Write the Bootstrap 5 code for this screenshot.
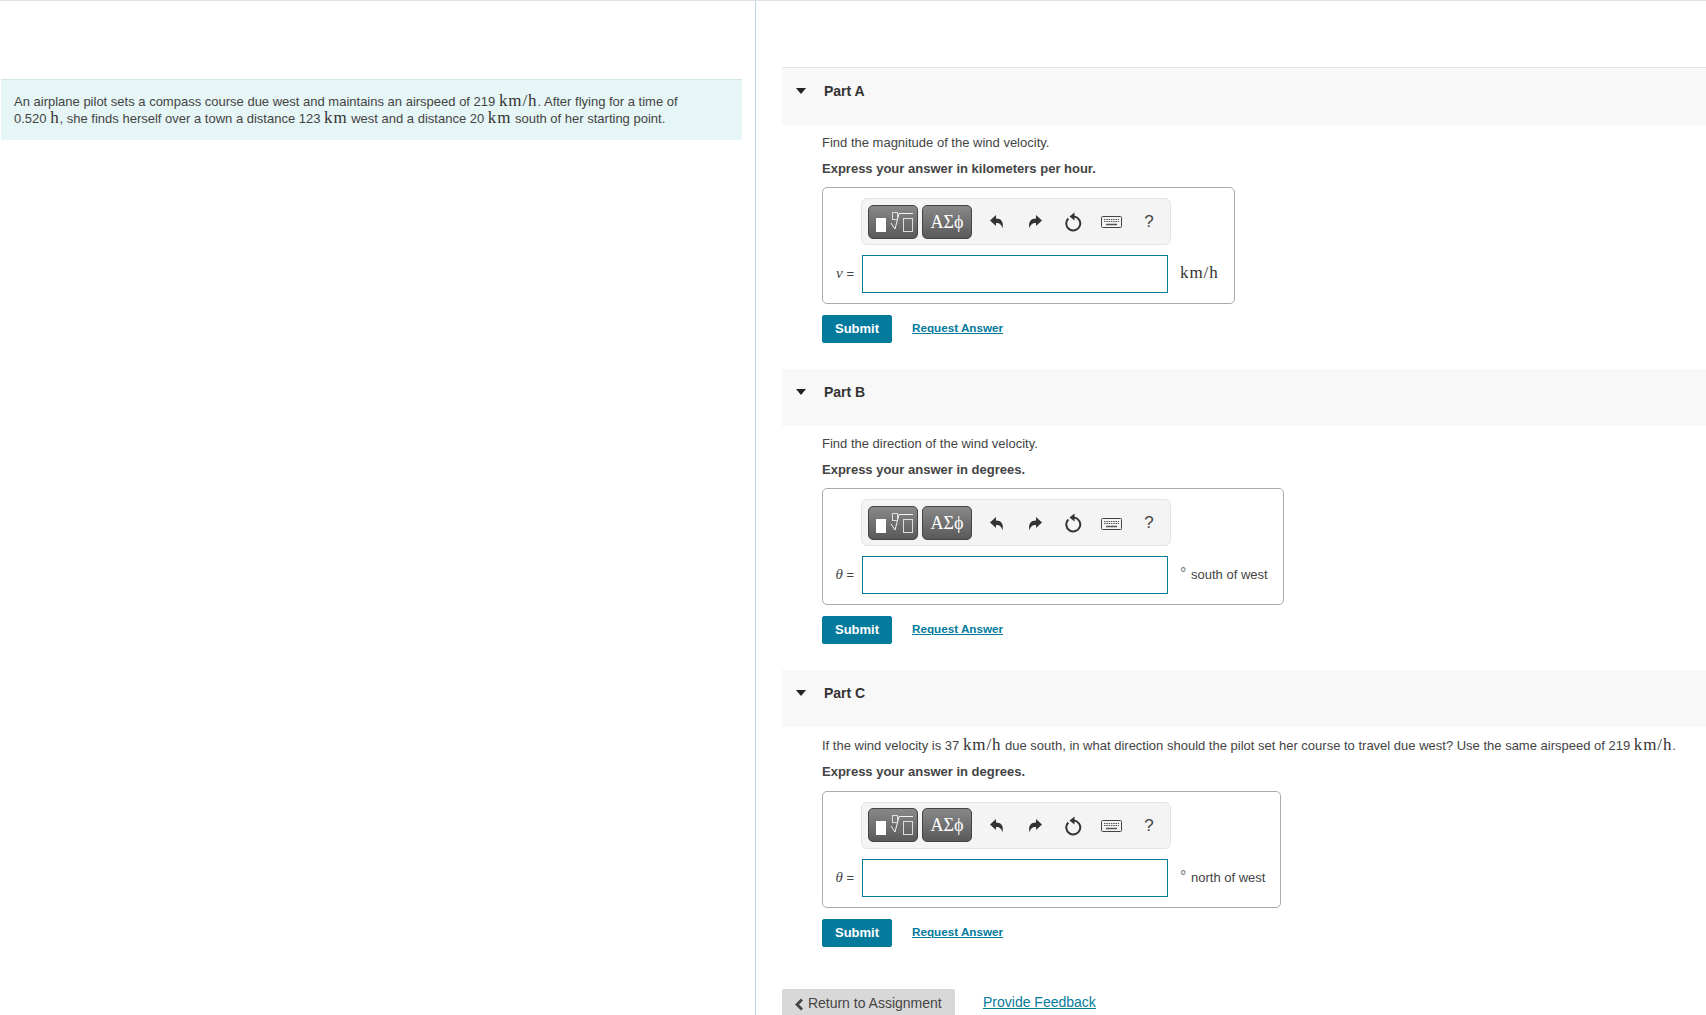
<!DOCTYPE html>
<html lang="en">
<head>
<meta charset="utf-8">
<title>Part A</title>
<link rel="stylesheet" href="https://cdn.jsdelivr.net/npm/bootstrap@5.3.0/dist/css/bootstrap.min.css">
<style>
html, body { height: 1015px; overflow: hidden; }
body { font-family: "Liberation Sans", Arial, sans-serif; font-size: 13px; color: #444; background: #fff; }
.shell { height: 1015px; border-top: 1px solid #e0e0e0; }
.left-pane { width: 756px; flex: none; border-right: 1px solid #bdd3dd; padding: 78px 13px 0 1px; }
.intro { background: #e6f5f5; border-top: 1px solid #d5e5e5; padding: 14px 12px 12px 13px; height: 61px; line-height: 16.5px; font-size: 13px; }
.right-pane { flex: 1; padding: 66px 0 0 26px; min-width: 0; }
.mth { font-family: "Liberation Serif", serif; font-size: 17px; letter-spacing: .9px; color: #333; line-height: 0; }
.part { height: 301.6px; }
.part-head { height: 57px; background: #f8f8f8; padding: 14px 0 0 14px; }
.part-first { height: 58px; border-top: 1px solid #e3e3e3; }
.caret-down { width: 0; height: 0; border-left: 5.5px solid transparent; border-right: 5.5px solid transparent; border-top: 6px solid #222; margin: 6px 18px 0 0; }
.part-title { font-weight: 700; font-size: 14px; color: #333; line-height: 18px; }
.part-body { padding: 8.8px 0 0 40px; }
.part-first + .part-body { padding-top: 8px; }
.prompt { height: 27px; line-height: 18px; padding-top: 1px; }
.instruct { height: 27px; line-height: 18px; font-weight: 700; color: #444; }
.prompt-tall { height: 28px; }
.answer-box { border: 1px solid #aaa; border-radius: 5px; padding: 10px 15px 10px 0; }
.tools { margin-left: 38px; width: 310px; height: 47px; background: #f4f4f4; border: 1px solid #e4e4e4; border-radius: 6px; padding: 6px 0 6px 6px; gap: 4px; }
.tool-btn { flex: none; width: 50px; height: 34px; padding: 0; border: 1px solid #444; border-radius: 5px; background: linear-gradient(#888, #5a5a5a); color: #fff; font-family: "Liberation Serif", serif; font-size: 18px; line-height: 1; }
.tool-btn:hover { background: linear-gradient(#888, #5a5a5a); color: #fff; border-color: #444; }
.tool-btn svg { display: block; }
.tool-icons { flex: none; padding-left: 2px; }
.tool-icon { width: 38px; text-align: center; }
.help-mark { font-size: 17px; color: #444; }
.answer-row { margin-top: 10px; }
.var-label { width: 39px; text-align: right; padding-right: 8px; margin-bottom: 2px; font-size: 13px; color: #444; }
.var-label i { font-family: "Liberation Serif", serif; font-size: 15px; }
.ans-input { width: 306px; height: 38px; border: 1px solid #047a9c; border-radius: 0; }
.unit { margin: 0 0 2px 12px; white-space: nowrap; }
.deg { font-size: 16px; margin-right: 1px; color: #777; }
.actions { margin-top: 11px; }
.send-btn { width: 70px; height: 28px; padding: 0; background: #047a9c; border-color: #047a9c; border-radius: 2px; font-size: 13px; font-weight: 700; color: #fff; line-height: 26px; }
.send-btn:hover { background: #047a9c; border-color: #047a9c; }
.reveal { margin: 0 0 3px 20px; font-size: 11.7px; font-weight: 700; color: #047a9c; }
.foot { margin-top: 17.5px; }
.back-btn { width: 173px; height: 27px; background: #d8d8d8; border: 0; border-radius: 2px 2px 0 0; padding: 1px 0 0 13px; font-size: 14px; color: #444; line-height: 27px; text-align: left; }
.feedback { margin-left: 28px; font-size: 14px; color: #047a9c; }
</style>
</head>
<body>
<div class="shell d-flex">
  <div class="left-pane">
    <div class="intro">An airplane pilot sets a compass course due west and maintains an airspeed of 219 <span class="mth">km/h</span>. After flying for a time of<br>0.520 <span class="mth">h</span>, she finds herself over a town a distance 123 <span class="mth">km</span> west and a distance 20 <span class="mth">km</span> south of her starting point.</div>
  </div>
  <div class="right-pane">

    <section class="part">
      <div class="part-head part-first d-flex align-items-start"><span class="caret-down"></span><span class="part-title">Part A</span></div>
      <div class="part-body">
        <div class="prompt">Find the magnitude of the wind velocity.</div>
        <div class="instruct">Express your answer in kilometers per hour.</div>
        <div class="answer-box d-inline-flex flex-column">
          <div class="tools d-flex align-items-center">
            <button type="button" class="btn tool-btn" aria-label="Templates"><svg width="48" height="32" viewBox="0 0 48 32"><rect x="7" y="12" width="10" height="14" fill="#fff"/><path d="M22 17l4 6 4-15.500h14" fill="none" stroke="#f4f4f4"/><rect x="23.500" y="6.500" width="5" height="7" fill="none" stroke="#ddd"/><rect x="34.500" y="12.500" width="9" height="13" fill="none" stroke="#ddd"/></svg></button>
            <button type="button" class="btn tool-btn">ΑΣϕ</button>
            <div class="tool-icons d-flex align-items-center">
              <span class="tool-icon"><svg width="16" height="16" viewBox="0 0 16 16"><path d="M1 6.500 7 1V4.500C12 4.500 15 7.500 13.500 14.500 12.800 11 11 9 7 9V12Z" fill="#333"/></svg></span>
              <span class="tool-icon"><svg width="16" height="16" viewBox="0 0 16 16"><path d="M15 6.500 9 1V4.500C4 4.500 1 7.500 2.500 14.500 3.200 11 5 9 9 9V12Z" fill="#333"/></svg></span>
              <span class="tool-icon"><svg width="18" height="20" viewBox="0 0 18 20"><path d="M4.300 6.500A7 7 0 1 0 10 4.500" fill="none" stroke="#333" stroke-width="2"/><path d="M10.500 .5v8l-5-4z" fill="#333"/></svg></span>
              <span class="tool-icon"><svg width="21" height="14" viewBox="0 0 21 14"><rect x=".5" y="1.500" width="20" height="11" rx="1" fill="#f4f4f4" stroke="#444"/><path d="M3 4.500h15M3 6.500h15" stroke="#555" stroke-dasharray="1.500 .8"/><path d="M5 9.500h11" stroke="#555" stroke-width="1.500"/></svg></span>
              <span class="tool-icon help-mark">?</span>
            </div>
          </div>
          <div class="answer-row d-flex align-items-center">
            <span class="var-label"><i>v</i> =</span>
            <input type="text" class="form-control ans-input" aria-label="v">
            <span class="unit mth">km/h</span>
          </div>
        </div>
        <div class="actions d-flex align-items-center"><button type="button" class="btn btn-primary send-btn">Submit</button><a href="#" class="reveal">Request Answer</a></div>
      </div>
    </section>

    <section class="part">
      <div class="part-head d-flex align-items-start"><span class="caret-down"></span><span class="part-title">Part B</span></div>
      <div class="part-body">
        <div class="prompt">Find the direction of the wind velocity.</div>
        <div class="instruct">Express your answer in degrees.</div>
        <div class="answer-box d-inline-flex flex-column">
          <div class="tools d-flex align-items-center">
            <button type="button" class="btn tool-btn" aria-label="Templates"><svg width="48" height="32" viewBox="0 0 48 32"><rect x="7" y="12" width="10" height="14" fill="#fff"/><path d="M22 17l4 6 4-15.500h14" fill="none" stroke="#f4f4f4"/><rect x="23.500" y="6.500" width="5" height="7" fill="none" stroke="#ddd"/><rect x="34.500" y="12.500" width="9" height="13" fill="none" stroke="#ddd"/></svg></button>
            <button type="button" class="btn tool-btn">ΑΣϕ</button>
            <div class="tool-icons d-flex align-items-center">
              <span class="tool-icon"><svg width="16" height="16" viewBox="0 0 16 16"><path d="M1 6.500 7 1V4.500C12 4.500 15 7.500 13.500 14.500 12.800 11 11 9 7 9V12Z" fill="#333"/></svg></span>
              <span class="tool-icon"><svg width="16" height="16" viewBox="0 0 16 16"><path d="M15 6.500 9 1V4.500C4 4.500 1 7.500 2.500 14.500 3.200 11 5 9 9 9V12Z" fill="#333"/></svg></span>
              <span class="tool-icon"><svg width="18" height="20" viewBox="0 0 18 20"><path d="M4.300 6.500A7 7 0 1 0 10 4.500" fill="none" stroke="#333" stroke-width="2"/><path d="M10.500 .5v8l-5-4z" fill="#333"/></svg></span>
              <span class="tool-icon"><svg width="21" height="14" viewBox="0 0 21 14"><rect x=".5" y="1.500" width="20" height="11" rx="1" fill="#f4f4f4" stroke="#444"/><path d="M3 4.500h15M3 6.500h15" stroke="#555" stroke-dasharray="1.500 .8"/><path d="M5 9.500h11" stroke="#555" stroke-width="1.500"/></svg></span>
              <span class="tool-icon help-mark">?</span>
            </div>
          </div>
          <div class="answer-row d-flex align-items-center">
            <span class="var-label"><i>θ</i> =</span>
            <input type="text" class="form-control ans-input" aria-label="theta">
            <span class="unit"><span class="deg">°</span> south of west</span>
          </div>
        </div>
        <div class="actions d-flex align-items-center"><button type="button" class="btn btn-primary send-btn">Submit</button><a href="#" class="reveal">Request Answer</a></div>
      </div>
    </section>

    <section class="part">
      <div class="part-head d-flex align-items-start"><span class="caret-down"></span><span class="part-title">Part C</span></div>
      <div class="part-body">
        <div class="prompt">If the wind velocity is 37 <span class="mth">km/h</span> due south, in what direction should the pilot set her course to travel due west? Use the same airspeed of 219 <span class="mth">km/h</span>.</div>
        <div class="instruct prompt-tall">Express your answer in degrees.</div>
        <div class="answer-box d-inline-flex flex-column">
          <div class="tools d-flex align-items-center">
            <button type="button" class="btn tool-btn" aria-label="Templates"><svg width="48" height="32" viewBox="0 0 48 32"><rect x="7" y="12" width="10" height="14" fill="#fff"/><path d="M22 17l4 6 4-15.500h14" fill="none" stroke="#f4f4f4"/><rect x="23.500" y="6.500" width="5" height="7" fill="none" stroke="#ddd"/><rect x="34.500" y="12.500" width="9" height="13" fill="none" stroke="#ddd"/></svg></button>
            <button type="button" class="btn tool-btn">ΑΣϕ</button>
            <div class="tool-icons d-flex align-items-center">
              <span class="tool-icon"><svg width="16" height="16" viewBox="0 0 16 16"><path d="M1 6.500 7 1V4.500C12 4.500 15 7.500 13.500 14.500 12.800 11 11 9 7 9V12Z" fill="#333"/></svg></span>
              <span class="tool-icon"><svg width="16" height="16" viewBox="0 0 16 16"><path d="M15 6.500 9 1V4.500C4 4.500 1 7.500 2.500 14.500 3.200 11 5 9 9 9V12Z" fill="#333"/></svg></span>
              <span class="tool-icon"><svg width="18" height="20" viewBox="0 0 18 20"><path d="M4.300 6.500A7 7 0 1 0 10 4.500" fill="none" stroke="#333" stroke-width="2"/><path d="M10.500 .5v8l-5-4z" fill="#333"/></svg></span>
              <span class="tool-icon"><svg width="21" height="14" viewBox="0 0 21 14"><rect x=".5" y="1.500" width="20" height="11" rx="1" fill="#f4f4f4" stroke="#444"/><path d="M3 4.500h15M3 6.500h15" stroke="#555" stroke-dasharray="1.500 .8"/><path d="M5 9.500h11" stroke="#555" stroke-width="1.500"/></svg></span>
              <span class="tool-icon help-mark">?</span>
            </div>
          </div>
          <div class="answer-row d-flex align-items-center">
            <span class="var-label"><i>θ</i> =</span>
            <input type="text" class="form-control ans-input" aria-label="theta">
            <span class="unit"><span class="deg">°</span> north of west</span>
          </div>
        </div>
        <div class="actions d-flex align-items-center"><button type="button" class="btn btn-primary send-btn">Submit</button><a href="#" class="reveal">Request Answer</a></div>
      </div>
    </section>

    <div class="foot d-flex align-items-center">
      <button type="button" class="btn back-btn"><svg width="9" height="13" viewBox="0 0 9 13"><path d="M7 1.500 2 6.500l5 5" fill="none" stroke="#444" stroke-width="2.800"/></svg> Return to Assignment</button>
      <a href="#" class="feedback">Provide Feedback</a>
    </div>
  </div>
</div>
<script src="https://cdn.jsdelivr.net/npm/bootstrap@5.3.0/dist/js/bootstrap.bundle.min.js"></script>
</body>
</html>
